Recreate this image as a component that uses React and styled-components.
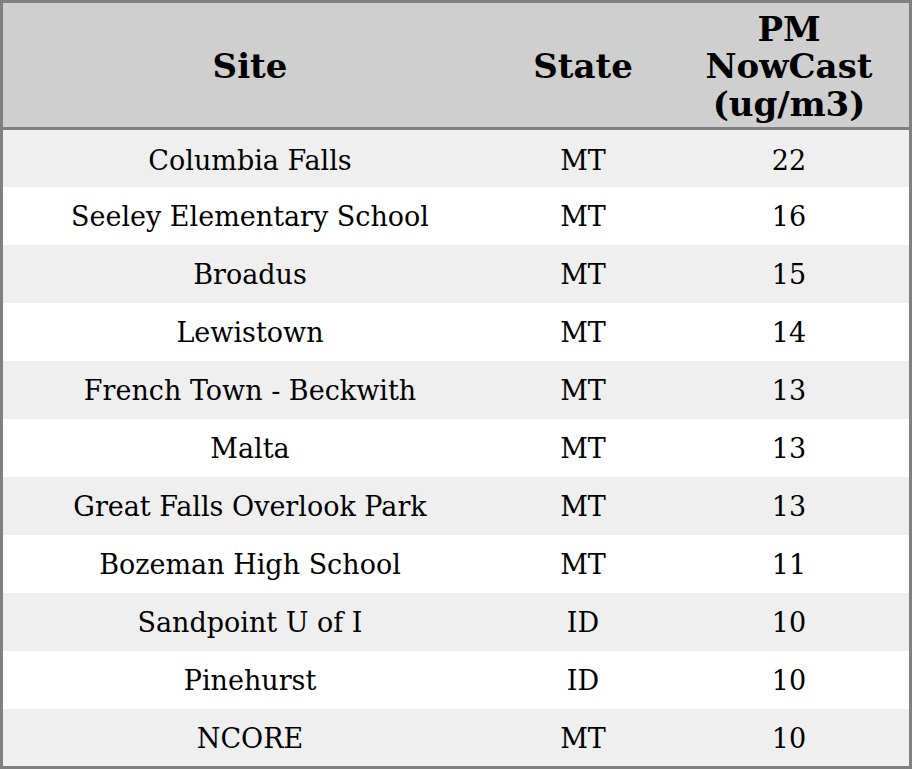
import React from "react";
import styled, { createGlobalStyle } from "styled-components";

const GlobalStyle = createGlobalStyle`
  html, body {
    margin: 0;
    padding: 0;
    background: #ffffff;
  }
`;

const Frame = styled.div`
  width: 906px;
  border: 3px solid #808080;
`;

const Table = styled.table`
  width: 100%;
  table-layout: fixed;
  border-collapse: collapse;
  font-family: "DejaVu Serif", serif;
  color: #000;
`;

const HeadCell = styled.th`
  background: #cfcfcf;
  font-size: 34px;
  font-weight: 700;
  line-height: 37.5px;
  height: 125px;
  padding: 4px 4px 0;
  box-sizing: border-box;
  border-bottom: 3px solid #808080;
  width: ${(p) => p.$w};
`;

const Row = styled.tr`
  background: ${(p) => (p.$odd ? "#efefef" : "#ffffff")};
`;

const Cell = styled.td`
  font-size: 27px;
  line-height: 30px;
  height: 58px;
  padding: 2px 4px 0;
  text-align: center;
  vertical-align: middle;
  box-sizing: border-box;

  tr:first-child > & {
    height: 59px;
    padding-top: 5px;
  }
  tr:last-child > & {
    height: 57px;
  }
`;

const rows = [
  ["Columbia Falls", "MT", 22],
  ["Seeley Elementary School", "MT", 16],
  ["Broadus", "MT", 15],
  ["Lewistown", "MT", 14],
  ["French Town - Beckwith", "MT", 13],
  ["Malta", "MT", 13],
  ["Great Falls Overlook Park", "MT", 13],
  ["Bozeman High School", "MT", 11],
  ["Sandpoint U of I", "ID", 10],
  ["Pinehurst", "ID", 10],
  ["NCORE", "MT", 10],
];

const App = () => {
  return (
    <>
      <GlobalStyle />
      <Frame>
        <Table>
          <thead>
            <tr>
              <HeadCell $w="494px">Site</HeadCell>
              <HeadCell $w="172px">State</HeadCell>
              <HeadCell $w="240px">
                PM
                <br />
                NowCast
                <br />
                (ug/m3)
              </HeadCell>
            </tr>
          </thead>
          <tbody>
            {rows.map((r, i) => (
              <Row key={r[0]} $odd={i % 2 === 0}>
                <Cell>{r[0]}</Cell>
                <Cell>{r[1]}</Cell>
                <Cell>{r[2]}</Cell>
              </Row>
            ))}
          </tbody>
        </Table>
      </Frame>
    </>
  );
};

export default App;
